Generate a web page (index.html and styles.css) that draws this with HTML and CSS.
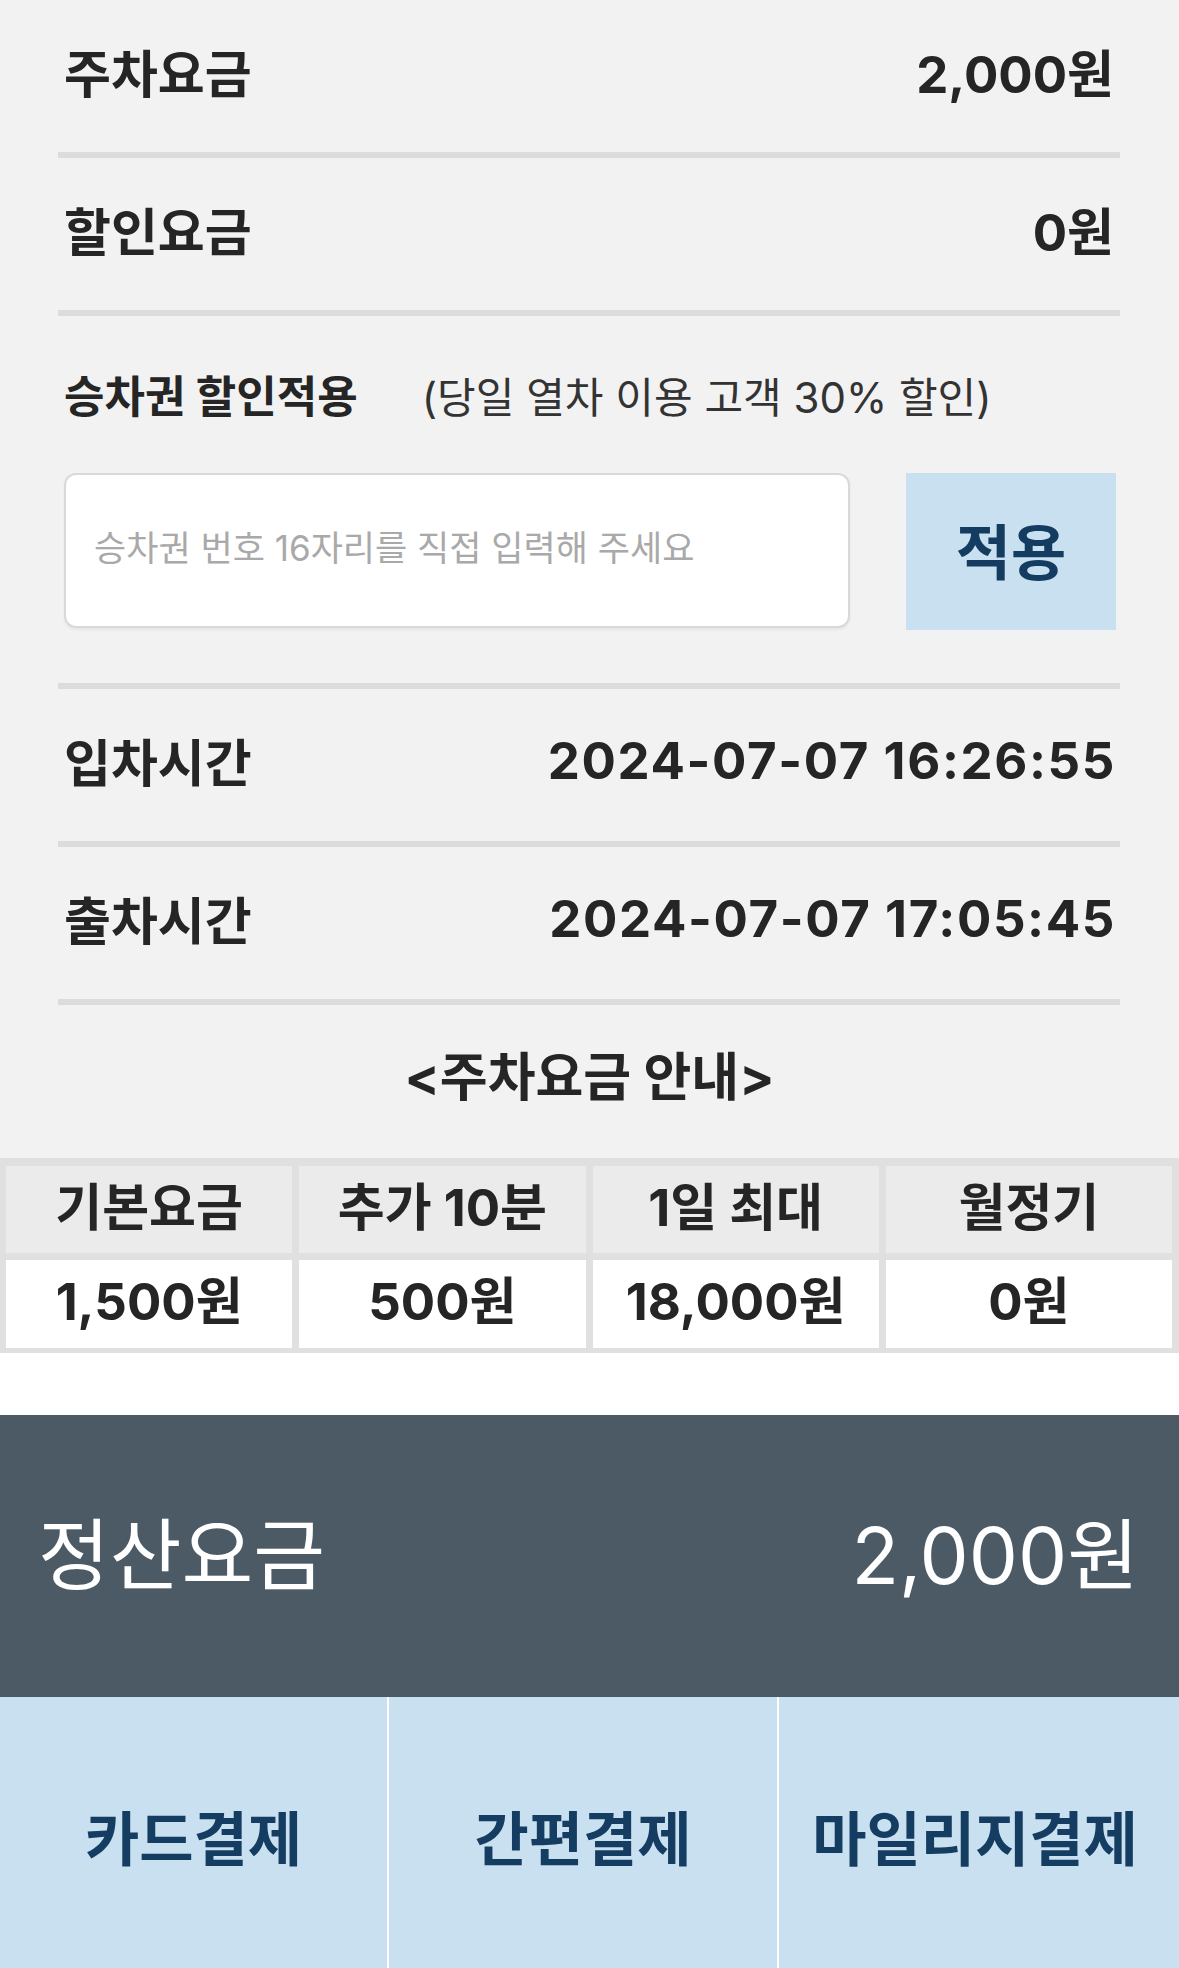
FILE: index.html
```html
<!DOCTYPE html>
<html lang="ko">
<head>
    <title>주차요금 정산</title>
    <meta charset="UTF-8">
    <meta name="viewport" content="width=device-width, initial-scale=1.0">
    <link rel="stylesheet" href="styles.css">
</head>
<body>
    <div class="fee-container">
        <div class="info-row">
            <span class="info-label">주차요금</span>
            <span class="info-value">2,000원</span>
        </div>
        <div class="info-row">
            <span class="info-label">할인요금</span>
            <span class="info-value">0원</span>
        </div>

        <!-- 승차권 할인 -->
        <div class="discount-box">
            <div class="discount-title">
                <span class="discount-label">승차권 할인적용</span>
                <span class="discount-note">(당일 열차 이용 고객 30% 할인)</span>
            </div>
            <form class="discount-form" onsubmit="return false;" autocomplete="off">
                <input type="text" class="ticket-input" placeholder="승차권 번호 16자리를 직접 입력해 주세요">
                <button type="submit" class="apply-button">적용</button>
            </form>
        </div>

        <div class="info-row">
            <span class="info-label">입차시간</span>
            <span class="info-value time-value">2024-07-07 16:26:55</span>
        </div>
        <div class="info-row">
            <span class="info-label">출차시간</span>
            <span class="info-value time-value">2024-07-07 17:05:45</span>
        </div>
    </div>

    <h3 class="guide-title">&lt;주차요금 안내&gt;</h3>
    <div class="guide-table">
        <div class="guide-head">기본요금</div>
        <div class="guide-head">추가 10분</div>
        <div class="guide-head">1일 최대</div>
        <div class="guide-head">월정기</div>
        <div class="guide-cell">1,500원</div>
        <div class="guide-cell">500원</div>
        <div class="guide-cell">18,000원</div>
        <div class="guide-cell">0원</div>
    </div>

    <div class="spacer"></div>

    <div class="total-bar">
        <span>정산요금</span>
        <span>2,000원</span>
    </div>
    <div class="pay-buttons">
        <button class="pay-button">카드결제</button>
        <button class="pay-button">간편결제</button>
        <button class="pay-button">마일리지결제</button>
    </div>
</body>
</html>
```

FILE: styles.css
```css
body, html {
    margin: 0;
    padding: 0;
    box-sizing: border-box;
}

*, *:before, *:after {
    box-sizing: inherit;
}

body {
    font-family: Inter, "Noto Sans CJK KR", sans-serif;
    background-color: #f2f2f2;
    color: #252525;
}

.fee-container {
    padding: 0 59px 0 58px;
}

.info-row {
    display: flex;
    justify-content: space-between;
    align-items: center;
    height: 158px;
    padding: 0 6px 10px 6px;
    border-bottom: 6px solid #dcdcdc;
    font-size: 51px;
    font-weight: bold;
}

.time-value {
    letter-spacing: 1.6px;
    margin-right: -2px;
}

.discount-box {
    padding: 54px 4px 53px 6px;
    border-bottom: 6px solid #dcdcdc;
}

.discount-title {
    display: flex;
    align-items: center;
    height: 48px;
    margin-bottom: 55px;
}

.discount-label {
    font-size: 44px;
    font-weight: bold;
    margin-right: 64px;
}

.discount-note {
    font-size: 42px;
    color: #333;
}

.discount-form {
    display: flex;
    gap: 56px;
    margin: 0;
}

.ticket-input {
    flex: 1;
    height: 155px;
    border: 2px solid #d9d9d9;
    border-radius: 12px;
    background-color: #fff;
    padding: 0 28px 6px 28px;
    font-family: inherit;
    font-size: 35px;
    box-shadow: 0 2px 3px rgba(0, 0, 0, 0.05);
}

.ticket-input::placeholder {
    color: #a9a9a9;
}

.apply-button {
    width: 210px;
    height: 157px;
    padding-bottom: 8px;
    border: none;
    background-color: #c9e0f0;
    color: #133c60;
    font-family: inherit;
    font-size: 60px;
    font-weight: bold;
    cursor: pointer;
}

.guide-title {
    margin: 0;
    height: 153px;
    padding-bottom: 16px;
    display: flex;
    justify-content: center;
    align-items: center;
    font-size: 52px;
    font-weight: bold;
}

.guide-table {
    display: grid;
    grid-template-columns: repeat(4, 1fr);
    grid-template-rows: 87px 88px;
    gap: 7px;
    padding: 8px 7px 5px 6px;
    background-color: #e0e0e0;
    font-size: 51px;
    font-weight: bold;
}

.guide-head, .guide-cell {
    display: flex;
    justify-content: center;
    align-items: center;
    padding-bottom: 12px;
}

.guide-head {
    background-color: #ebebeb;
}

.guide-cell {
    background-color: #fff;
}

.spacer {
    height: 62px;
    background-color: #fff;
}

.total-bar {
    display: flex;
    justify-content: space-between;
    align-items: center;
    height: 282px;
    padding: 0 40px 12px 38px;
    background-color: #4b5a65;
    color: #fff;
    font-size: 78px;
}

.pay-buttons {
    display: grid;
    grid-template-columns: 387px 388px 1fr;
    gap: 2px;
    background-color: #fff;
}

.pay-button {
    height: 276px;
    border: none;
    background-color: #c9e0f0;
    color: #143d61;
    font-family: inherit;
    font-size: 59px;
    font-weight: bold;
    cursor: pointer;
}

.pay-button:last-child {
    padding-right: 14px;
}
```
